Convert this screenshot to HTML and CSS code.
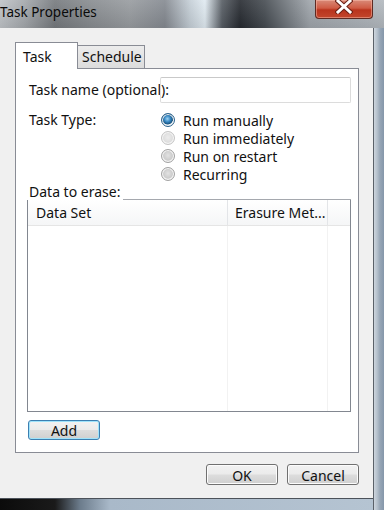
FILE: index.html
```html
<!DOCTYPE html>
<html lang="en">
<head>
  <meta charset="UTF-8">
  <title>Task Properties</title>
  <link rel="stylesheet" href="styles.css">
</head>
<body>
  <div class="window">
    <!-- Title bar -->
    <header class="titlebar">
      <span class="title">Task Properties</span>
      <button class="close" aria-label="Close">
        <svg width="18" height="14" viewBox="0 0 18 14">
          <path d="M3 1 L15 12 M15 1 L3 12" stroke="#6b2015" stroke-width="5" stroke-linecap="square" fill="none"/>
          <path d="M3 1 L15 12 M15 1 L3 12" stroke="#ffffff" stroke-width="3" stroke-linecap="square" fill="none"/>
        </svg>
      </button>
    </header>

    <main class="client">
      <div class="tabs">
        <div class="tab active">Task</div>
        <div class="tab">Schedule</div>
      </div>

      <section class="panel">
        <div class="form">
          <label class="field-label" for="taskName">Task name (optional):</label>
          <input class="textbox" type="text" id="taskName">

          <span class="field-label type-label">Task Type:</span>
          <div class="radios">
            <label class="radio"><span class="dot checked"></span>Run manually</label>
            <label class="radio"><span class="dot faded"></span>Run immediately</label>
            <label class="radio"><span class="dot"></span>Run on restart</label>
            <label class="radio"><span class="dot"></span>Recurring</label>
          </div>
        </div>

        <div class="list-title">
          <span class="field-label">Data to erase:</span>
          <span class="rule"></span>
        </div>
        <div class="listview">
          <div class="lv-row lv-head">
            <div class="col">Data Set</div>
            <div class="col">Erasure Met...</div>
            <div class="col"></div>
          </div>
          <div class="lv-row lv-body">
            <div class="col"></div>
            <div class="col"></div>
            <div class="col"></div>
          </div>
        </div>

        <button class="btn default">Add</button>
      </section>

      <footer class="actions">
        <button class="btn">OK</button>
        <button class="btn">Cancel</button>
      </footer>
    </main>

    <div class="edge-right"></div>
    <div class="edge-bottom"></div>
  </div>
</body>
</html>
```

FILE: styles.css
```css
body {
  margin: 0;
  padding: 0;
  font-family: 'Noto Sans', 'Open Sans', sans-serif;
  font-size: 14px;
  color: #111;
  background: #555;
}

.window {
  width: 384px;
  height: 510px;
  display: grid;
  grid-template-columns: 373px 11px;
  grid-template-rows: 28px 470px 12px;
  overflow: hidden;
}

/* ---------- title bar (blurred glass) ---------- */
.titlebar {
  grid-column: 1 / 3;
  display: flex;
  justify-content: space-between;
  align-items: flex-start;
  background:
    linear-gradient(to bottom, rgba(255,255,255,0.1), rgba(0,0,0,0.08)),
    linear-gradient(to right, #bfc3c7 0px, #a3a7ab 25px, #75797d 55px, #878b8f 90px,
      #979b9f 130px, #848990 165px, #c4ced6 190px, #e0eaf1 205px, #565c63 222px,
      #262a30 240px, #454b51 265px, #777d83 290px, #9ea4aa 310px, #b2b8be 384px);
}

.title {
  font-size: 13.5px;
  line-height: 14px;
  margin-top: 5px;
  color: #0a0a0a;
}

.close {
  width: 58px;
  height: 19px;
  margin-right: 11px;
  padding: 0;
  border: 1px solid #5e2a22;
  border-top: none;
  border-radius: 0 0 4px 4px;
  background: linear-gradient(to bottom, #d98a78 0%, #cf5b44 45%, #b9341d 55%, #c2462c 100%);
  box-shadow: inset 0 0 0 1px rgba(255, 200, 185, 0.45);
  display: flex;
  justify-content: center;
  align-items: flex-start;
}

/* ---------- frame edges ---------- */
.edge-right {
  grid-column: 2;
  grid-row: 2 / 4;
  background: linear-gradient(to right, #5b6169 0px, #5b6169 1px, #cdd5dd 1px, #b7c2cd 4px,
    #97a6b6 7px, #8597aa 11px);
}

.edge-bottom {
  grid-column: 1;
  grid-row: 3;
  background: linear-gradient(to right, #0b0b0b 0px, #1a1a1a 55px, #6c7c8c 80px, #a9b9c9 110px, #b5c4d2 373px);
  border-top: 1px solid #4c525a;
}

/* ---------- client area ---------- */
.client {
  grid-column: 1;
  grid-row: 2;
  background: #f0f0f0;
  padding: 14px 14px 0 15px;
  display: flex;
  flex-direction: column;
}

.tabs {
  display: flex;
  align-items: flex-end;
  height: 27px;
  margin-bottom: -1px;
}

.tab {
  box-sizing: border-box;
  border: 1px solid #898c95;
  border-bottom: none;
  padding: 0 7px;
  line-height: 22px;
}

.tab.active {
  width: 63px;
  height: 27px;
  background: #fff;
  position: relative;
  z-index: 1;
  padding-top: 3px;
}

.tab:not(.active) {
  width: 68px;
  height: 23px;
  margin-left: -1px;
  margin-bottom: 1px;
  padding-left: 4px;
  background: linear-gradient(to bottom, #ececec, #dcdcdc);
}

.panel {
  background: #fff;
  border: 1px solid #898c95;
  padding: 8px 7px 12px 11px;
}

.field-label {
  padding-left: 2px;
  line-height: 18px;
  white-space: nowrap;
}

/* form grid */
.form {
  display: grid;
  grid-template-columns: 133px minmax(0, 1fr);
  row-gap: 8px;
  align-items: center;
}

.textbox {
  box-sizing: border-box;
  width: 100%;
  min-width: 0;
  height: 26px;
  margin: 0;
  border: 1px solid #dcdcdc;
  border-top-color: #c9c9c9;
  border-radius: 2px;
  background: transparent;
  font: inherit;
}

.type-label {
  align-self: start;
}

.radios {
  display: flex;
  flex-direction: column;
}

.radio {
  display: flex;
  align-items: center;
  height: 18px;
  gap: 8px;
  padding-left: 1px;
}

.dot {
  box-sizing: border-box;
  width: 14px;
  height: 14px;
  border-radius: 50%;
  border: 1px solid #a2a2a2;
  background: radial-gradient(circle at 50% 45%, #e2e2e2 0%, #cdcdcd 50%, #f4f4f4 100%);
  box-shadow: inset 0 0 0 1px #f7f7f7;
}

.dot.faded {
  border-color: #c4c4c4;
  background: radial-gradient(circle at 50% 45%, #ececec 0%, #dddddd 55%, #f8f8f8 100%);
}

.dot.checked {
  border-color: #2c628b;
  background: radial-gradient(circle at 45% 40%, #9fd3f3 0%, #3b8bc5 30%, #17527f 55%, #e4eef5 62%, #c7dae8 100%);
}

/* data list */
.list-title {
  display: flex;
  align-items: flex-end;
  height: 17px;
}

.list-title .field-label {
  line-height: 15px;
  margin-bottom: 1px;
}

.rule {
  flex: 1;
  border-bottom: 1px solid #a5a8ae;
  margin-left: 3px;
}

.listview {
  border: 1px solid #828790;
  border-top: none;
  height: 211px;
  display: flex;
  flex-direction: column;
}

.lv-row {
  display: grid;
  grid-template-columns: 200px 100px 1fr;
}

.lv-head {
  box-sizing: border-box;
  height: 26px;
  background: linear-gradient(to bottom, #ffffff, #f5f6f7);
  border-bottom: 1px solid #e5e5e5;
}

.lv-head .col {
  line-height: 25px;
  padding-left: 8px;
  border-right: 1px solid #e3e5e8;
  white-space: nowrap;
  overflow: hidden;
}

.lv-head .col:nth-child(2) {
  padding-left: 7px;
}

.lv-head .col:last-child {
  border-right: none;
}

.lv-body {
  flex: 1;
}

.lv-body .col {
  border-right: 1px solid #f2f2f2;
}

.lv-body .col:last-child {
  border-right: none;
}

/* buttons */
.btn {
  box-sizing: border-box;
  width: 72px;
  height: 21px;
  padding: 2px 0 0;
  border: 1px solid #707070;
  border-radius: 3px;
  background: linear-gradient(to bottom, #f2f2f2 0%, #ebebeb 48%, #dddddd 52%, #cfcfcf 100%);
  box-shadow: inset 0 0 0 1px #fcfcfc;
  font: inherit;
  font-size: 14px;
  line-height: 17px;
  color: #111;
}

.btn.default {
  display: block;
  margin-top: 8px;
  margin-left: 1px;
  height: 20px;
  padding-top: 1px;
  border-color: #3c7fb1;
  box-shadow: inset 0 0 0 1px #9fe3fb;
}

.actions {
  display: flex;
  justify-content: flex-end;
  gap: 9px;
  margin-top: 11px;
}
```
